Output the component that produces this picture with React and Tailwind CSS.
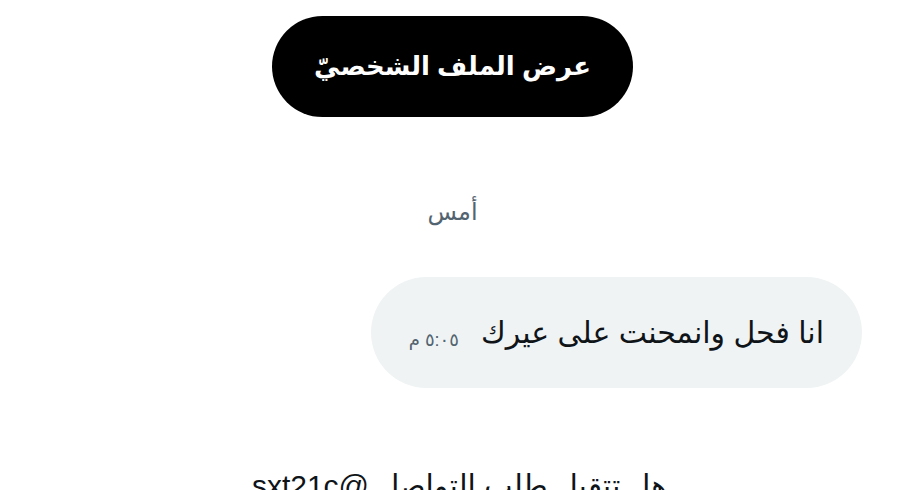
export default function App() {
  return (
    <div
      dir="rtl"
      className="w-[899px] h-[490px] overflow-hidden bg-white flex flex-col items-center"
      style={{ fontFamily: '"Liberation Sans", "DejaVu Sans", sans-serif' }}
    >
      {/* profile button */}
      <div className="shrink-0 mt-[16px] ml-[6px] w-[361px] h-[101px] rounded-full bg-black flex items-center justify-center">
        <span className="text-white text-[26px] font-bold leading-none mb-[2px]">عرض الملف الشخصيّ</span>
      </div>

      {/* day divider */}
      <div className="shrink-0 mt-[80px] ml-[6px] h-[30px] text-[24px] leading-[30px] text-[#536471]">أمس</div>

      {/* message bubble */}
      <div className="shrink-0 mt-[50px] self-start mr-[37px] h-[111px] rounded-full bg-[#eff3f4] flex items-center pr-[38px] pl-[38px] gap-[22px]">
        <span className="text-[30px] text-[#0f1419] leading-none">انا فحل وانمحنت على عيرك</span>
        <span className="text-[18px] text-[#536471] leading-none mt-[14px]">٥:٠٥ م</span>
      </div>

      {/* message request prompt */}
      <div className="shrink-0 mt-[83px] ml-[20px] h-[30px] text-[30px] leading-[30px] text-[#0f1419] whitespace-nowrap">
        هل تتقبل طلب التواصل @sxt21c
      </div>
    </div>
  );
}
